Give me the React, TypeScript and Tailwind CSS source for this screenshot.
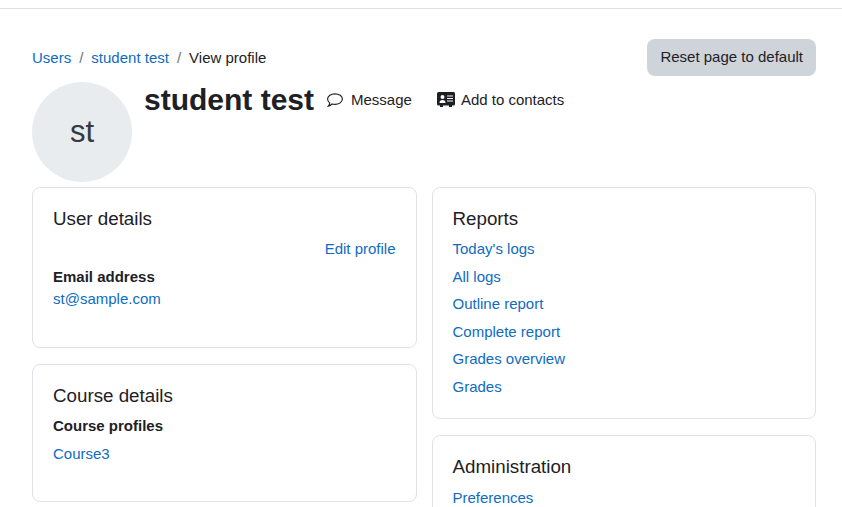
import React from 'react';

const Link: React.FC<{ children: React.ReactNode }> = ({ children }) => (
  <a href="#" className="text-[#0f6cbf]">{children}</a>
);

const Card: React.FC<{ className: string; title: string; children: React.ReactNode }> = ({ className, title, children }) => (
  <section className={`border border-[#dee2e6] rounded-lg px-5 pt-5 ${className}`}>
    <h3 className="text-[18.75px] leading-[22.5px] font-normal text-[#1d2125] mb-[7.6px]">{title}</h3>
    {children}
  </section>
);

const reports = ["Today's logs", 'All logs', 'Outline report', 'Complete report', 'Grades overview', 'Grades'];

export default function App() {
  return (
    <div className="h-[507px] overflow-hidden bg-white text-[15px] leading-[22.5px] text-[#1d2125] font-['Liberation_Sans',Arial,sans-serif]">
      <div className="h-[9px] border-b border-[#dee2e6]" />

      <div className="pl-8 pr-[26px]">
        <div className="flex items-start justify-between pt-[30px]">
          <nav className="flex items-center pt-[8px]">
            <Link>Users</Link>
            <span className="px-2 text-[#6a737b]">/</span>
            <Link>student test</Link>
            <span className="px-2 text-[#6a737b]">/</span>
            <span>View profile</span>
          </nav>
          <button className="h-[37px] px-[13px] rounded-lg bg-[#ced4da] text-[#1d2125]">Reset page to default</button>
        </div>

        <div className="flex items-start mt-[6px]">
          <div className="w-[100px] h-[100px] rounded-full bg-[#e9ecef] flex items-center justify-center text-[31px] text-[#343a40]">st</div>
          <h2 className="ml-3 text-[30px] leading-9 font-bold">student test</h2>
          <div className="flex items-center ml-[13px] h-9">
            <svg viewBox="0 0 16 14" className="w-4 h-[14px] mr-2 fill-none stroke-current stroke-[1.15]">
              <path d="M8 .8c4 0 7.4 2.3 7.4 5.3S12 11.4 8 11.4c-1 0-2-.15-2.9-.42C4.2 11.9 2.9 12.900 1.3 13.2c.8-.9 1.3-1.9 1.4-3.2C1.4 9.100.6 7.700.6 6.100.6 3.100 4 .8 8 .8z" />
            </svg>
            <span>Message</span>
            <svg viewBox="0 0 18 15" className="w-[18px] h-[15px] fill-current ml-[25px] mr-[6px] -mt-px">
              <path fillRule="evenodd" d="M1.500 0H16.500A1.500 1.500 0 0 1 18 1.500V12A1.500 1.500 0 0 1 16.500 13.500H15V15H12V13.500H6V15H3V13.500H1.500A1.500 1.500 0 0 1 0 12V1.500A1.500 1.500 0 0 1 1.500 0ZM5.500 3A2 2 0 1 0 5.500 7A2 2 0 1 0 5.500 3ZM2.500 11H8.500C8.500 9 7.500 8 5.500 8S2.500 9 2.500 11ZM10 3.500V4.500H16V3.500ZM10 6V7H16V6ZM10 8.500V9.500H16V8.500Z" />
            </svg>
            <span>Add to contacts</span>
          </div>
        </div>

        <div className="flex gap-[15px] mt-[5px]">
          <div className="w-[384.5px] shrink-0 flex flex-col gap-4">
            <Card className="h-[161px]" title="User details">
              <div className="text-right"><Link>Edit profile</Link></div>
              <div className="font-bold mt-[5px]">Email address</div>
              <div><Link>st@sample.com</Link></div>
            </Card>
            <Card className="h-[138px]" title="Course details">
              <div className="font-bold">Course profiles</div>
              <div className="mt-[5px]"><Link>Course3</Link></div>
            </Card>
          </div>

          <div className="w-[384.5px] shrink-0 flex flex-col gap-4">
            <Card className="h-[232px]" title="Reports">
              <ul className="flex flex-col gap-[5px]">
                {reports.map(r => (
                  <li key={r}><Link>{r}</Link></li>
                ))}
              </ul>
            </Card>
            <Card className="h-[200px]" title="Administration">
              <div className="pt-[0.5px]"><Link>Preferences</Link></div>
            </Card>
          </div>
        </div>
      </div>
    </div>
  );
}
